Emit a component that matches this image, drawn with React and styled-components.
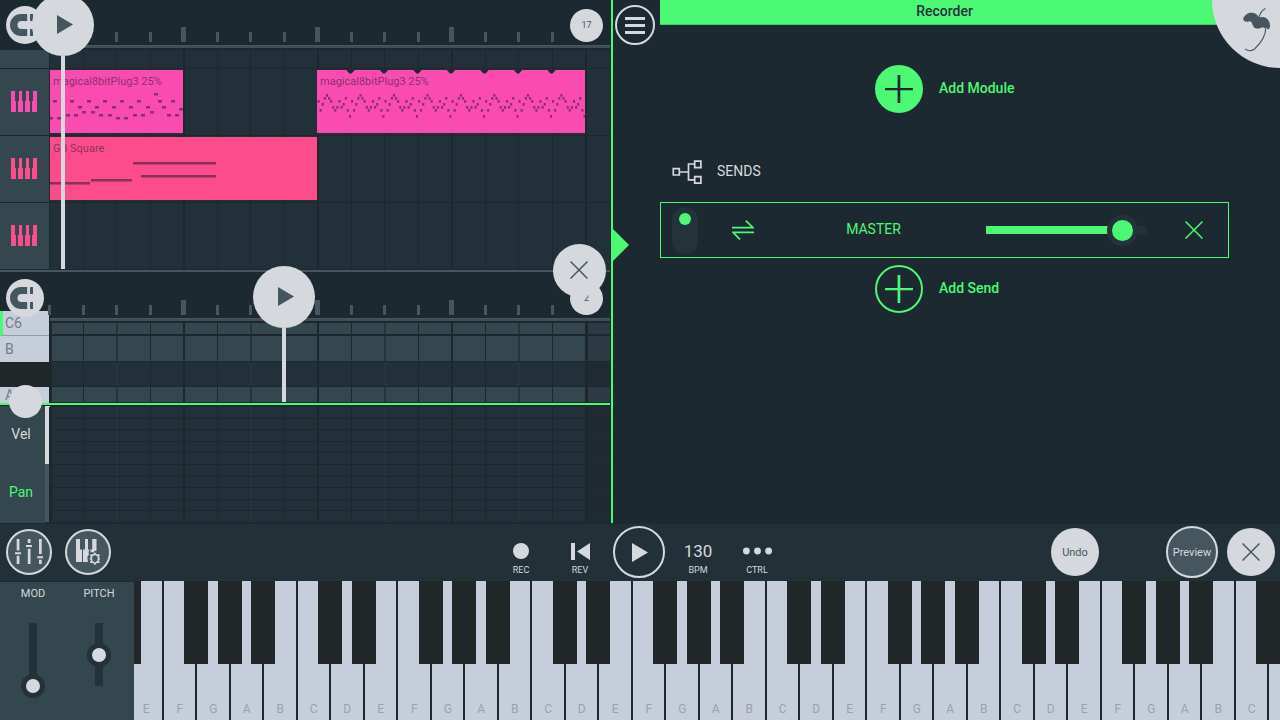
import React, { useState } from 'react';
import styled, { createGlobalStyle, css } from 'styled-components';

const GlobalStyle = createGlobalStyle`
  :root {
    --bg: #1d2930;
    --bg-lane: #223139;
    --bg-side: #34464e;
    --slate: #46565f;
    --light: #d5d9dd;
    --green: #4cf974;
    --key-white: #c7cedb;
    --key-black: #212629;
    --line: #1c272e;
  }

  * {
    box-sizing: border-box;
  }

  body {
    margin: 0;
    background: var(--bg);
    color: var(--light);
    font-family: Roboto, 'Liberation Sans', sans-serif;
    font-size: 14px;
    overflow-x: hidden;
  }

  button,
  input {
    margin: 0;
    padding: 0;
    font: inherit;
    color: inherit;
  }

  button {
    border: none;
    background: none;
    cursor: pointer;
  }

  svg {
    display: block;
  }
`;

const Page = styled.div`
  display: flex;
  flex-direction: column;
  min-height: 100vh;
  overflow: hidden;
`;

const Workspace = styled.main`
  display: grid;
  grid-template-columns: minmax(0, 611fr) minmax(0, 669fr);
  padding-bottom: 1px;
`;

// ---------- shared ----------

const RoundButton = styled.button`
  display: flex;
  align-items: center;
  justify-content: center;
  flex-shrink: 0;
  width: ${(p) => p.$size}px;
  height: ${(p) => p.$size}px;
  border-radius: 50%;
  background: var(--light);
  color: var(--slate);
  font-size: 11px;

  ${(p) =>
    p.$outlined &&
    css`
      border: 2px solid var(--light);
      background: ${p.$fill || 'transparent'};
      color: var(--light);
    `}
`;

// ---------- playlist and piano roll ----------

const Editors = styled.section`
  display: flex;
  flex-direction: column;
  padding-right: 1px;
`;

const Panel = styled.div`
  position: relative;
`;

const RollPanel = styled(Panel)`
  flex: 1;
  display: flex;
  flex-direction: column;
  border-top: 2px solid var(--slate);
  padding-top: 1px;
`;

const WithSide = styled.div`
  display: grid;
  grid-template-columns: 49px minmax(0, 1fr);
`;

const Corner = styled.div`
  position: relative;
  z-index: 1;
  height: ${(p) => p.$height}px;
  padding: 6px;
`;

const SnapButton = styled(RoundButton)`
  padding-right: 7px;
`;

const Ruler = styled.div`
  position: relative;
  height: 50px;
`;

const beatColumns = css`
  display: grid;
  grid-template-columns: repeat(16, minmax(0, 1fr)) 25px;
`;

const Ticks = styled.div`
  ${beatColumns}
  align-items: end;
  height: 45px;
  padding-bottom: 3px;
`;

const Tick = styled.span`
  width: ${(p) => (p.$major ? 5 : 3)}px;
  height: ${(p) => (p.$major ? 15 : 10)}px;
  margin-left: ${(p) => (p.$major ? -2 : -1)}px;
  background: var(--slate);
`;

const RulerLine = styled.div`
  height: 3px;
  margin-left: 1px;
  background: #3e4e57;
  border-top: 1px solid var(--slate);
`;

const BarCount = styled(RoundButton)`
  position: absolute;
  top: 9px;
  right: 7px;
  padding-bottom: 2px;
  font-size: 9px;
`;

const Track = styled.div`
  display: grid;
  grid-template-columns: 49px minmax(0, 1fr);
  height: ${(p) => p.$height}px;
  border-bottom: 1px solid var(--line);
`;

const TrackHead = styled.button`
  display: flex;
  align-items: center;
  justify-content: center;
  padding: 0 2px 2px 0;
  background: var(--bg-side);
  color: ${(p) => p.$color};
`;

const Lane = styled.div`
  ${beatColumns}
`;

const LaneCell = styled.span`
  grid-row: 1;
  grid-column: ${(p) => p.$beat + 1};
  background: var(--bg-lane);
  border-left: ${(p) => (p.$beat && p.$beat % 4 === 0 ? 2 : 1)}px solid var(--line);
`;

const Clip = styled.div`
  grid-row: 1;
  grid-column: ${(p) => p.$from + 1} / ${(p) => p.$to + 1};
  display: grid;
  z-index: 1;
  height: 63px;
  margin-top: 1px;
  margin-left: ${(p) => (p.$from ? 0 : 1)}px;
  background: ${(p) => p.$color};
  overflow: hidden;
`;

const ClipName = styled.span`
  grid-area: 1 / 1;
  padding: 4px 3px;
  font-size: 11px;
  line-height: 15px;
  color: rgba(52, 30, 60, 0.6);
  white-space: nowrap;
`;

const ClipNotes = styled.svg`
  grid-area: 1 / 1;
  width: 100%;
  height: 63px;
  fill: rgba(42, 28, 50, 0.55);
`;

const PlayheadBox = styled.div`
  position: absolute;
  z-index: 2;
  left: ${(p) => p.$left}px;
  top: ${(p) => p.$top}px;
  height: ${(p) => p.$height}px;
  display: flex;
  flex-direction: column;
  align-items: center;
  pointer-events: none;

  button {
    padding: 0 0 2px 3px;
    pointer-events: auto;
  }
`;

const Stem = styled.span`
  flex: 1;
  width: 4px;
  background: var(--light);
`;

const ClosePanel = styled(RoundButton)`
  position: absolute;
  z-index: 3;
  top: -28px;
  right: 4px;
  padding: 0 2px 2px 0;
`;

const Keys = styled.div`
  display: flex;
  flex-direction: column;
`;

const SideKey = styled.button`
  display: flex;
  align-items: center;
  height: ${(p) => p.$height}px;
  padding-left: ${(p) => (p.$root ? 2 : 5)}px;
  background: ${(p) => (p.$black ? 'var(--key-black)' : 'var(--key-white)')};
  border-left: ${(p) => (p.$root ? '3px solid var(--green)' : 'none')};
  border-bottom: ${(p) => (p.$root ? '1px solid #949ba8' : 'none')};
  color: #757b86;
  overflow: hidden;
`;

const RollRow = styled.div`
  ${beatColumns}
  height: ${(p) => p.$height}px;
  border-bottom: ${(p) => p.$gap}px solid var(--line);
`;

const RollCell = styled.span`
  background: ${(p) => (p.$dark ? 'var(--bg-lane)' : 'var(--bg-side)')};
  border-left: 1px solid var(--line);

  ${(p) => p.$beat % 4 === 0 && css`border-left-width: 2px;`}
  ${(p) => p.$beat % 16 === 0 && css`border-left-width: 3px;`}
  ${(p) => p.$beat % 4 === 2 && css`border-left: 2px solid #27343c;`}
  ${(p) =>
    p.$beat === 16 &&
    css`
      background: ${p.$dark ? '#1f2a32' : '#2c3a43'};
    `}
`;

const SplitLine = styled.div`
  height: 2px;
  background: var(--green);
`;

const SplitKnob = styled.button`
  position: absolute;
  z-index: 2;
  left: 9px;
  top: 113px;
  width: 33px;
  height: 33px;
  border-radius: 50%;
  background: var(--light);
`;

const Automation = styled.div`
  flex: 1;
  display: grid;
  grid-template-columns: 45px 5px minmax(0, 1fr);
  min-height: 118px;
`;

const Params = styled.div`
  display: flex;
  flex-direction: column;
  margin-top: 1px;
  background: var(--bg-side);
`;

const Param = styled.button`
  flex: 1;
  padding: 0 3px 3px 0;
  color: ${(p) => (p.$active ? 'var(--green)' : 'var(--light)')};
`;

const Scrollbar = styled.div`
  margin: 1px 0;
  background: linear-gradient(var(--light) 50%, var(--slate) 50%);
`;

const AutomationLanes = styled.div`
  display: flex;
  flex-direction: column;
  margin-left: -1px;
  padding-top: 2px;
`;

const AutomationRow = styled.div`
  ${beatColumns}
  flex: 1;
  border-bottom: 1px solid var(--line);
`;

// ---------- rack ----------

const Rack = styled.section`
  display: grid;
  grid-template-columns: 47px minmax(0, 1fr) 51px;
  border-left: 2px solid var(--green);
  position: relative;
  overflow: hidden;
`;

const Gutter = styled.div`
  padding: 5px 2px;
`;

const PanelHandle = styled.button`
  display: block;
  width: 16px;
  height: 32px;
  margin: 184px 0 0 -2px;
  background: var(--green);
  clip-path: polygon(0 0, 100% 50%, 0 100%);
`;

const RackTitle = styled.h1`
  height: 25px;
  margin: 0 0 40px;
  border-bottom: 1px solid #41cf66;
  background: var(--green);
  color: #22313a;
  font-size: 14px;
  font-weight: 500;
  line-height: 22px;
  text-align: center;
`;

const LogoButton = styled.button`
  position: absolute;
  top: 0;
  right: 0;
  width: 68px;
  height: 68px;
  padding: 8px 9px 16px 31px;
  border-bottom-left-radius: 100%;
  background: var(--light);
  color: var(--slate);
`;

const AddButton = styled.button`
  display: flex;
  align-items: center;
  gap: 16px;
  width: 139px;
  margin: 0 auto;
  color: var(--green);
  font-weight: 500;
  white-space: nowrap;
`;

const AddCircle = styled.span`
  display: flex;
  align-items: center;
  justify-content: center;
  flex-shrink: 0;
  width: 48px;
  height: 48px;
  border: 2px solid var(--green);
  border-radius: 50%;
  background: ${(p) => (p.$filled ? 'var(--green)' : 'transparent')};
  color: ${(p) => (p.$filled ? 'var(--bg)' : 'var(--green)')};
`;

const Label = styled.span`
  padding-bottom: 2px;
`;

const SendsTitle = styled.h2`
  display: flex;
  align-items: center;
  gap: 15px;
  height: 24px;
  margin: 47px 0 18px 12px;
  font-size: 14px;
  font-weight: 400;
`;

const Send = styled.div`
  display: grid;
  grid-template-columns: 48px 68px minmax(0, 1fr) 160px 82px;
  align-items: center;
  justify-items: center;
  height: 56px;
  margin-bottom: 7px;
  border: 1px solid var(--green);
  color: var(--green);
`;

const SendSwitch = styled.input`
  appearance: none;
  width: 26px;
  height: 47px;
  border-radius: 13px;
  background: #24323a;
  cursor: pointer;

  &::before {
    content: '';
    display: block;
    width: 12px;
    height: 12px;
    margin: 28px auto 0;
    border-radius: 50%;
    background: var(--slate);
  }

  &:checked::before {
    margin-top: 6px;
    background: var(--green);
  }
`;

const SendName = styled.span`
  padding: 0 16px 2px 0;
`;

const LevelSlider = styled.input`
  appearance: none;
  width: 160px;
  height: 8px;
  background: linear-gradient(var(--green), var(--green)) no-repeat #24323a;

  &::-webkit-slider-thumb {
    appearance: none;
    width: 31px;
    height: 31px;
    border: 5px solid #24323a;
    border-radius: 50%;
    background: var(--green);
  }
`;

const RemoveSend = styled.button`
  padding-left: 14px;
`;

// ---------- transport ----------

const Transport = styled.div`
  display: grid;
  grid-template-columns: minmax(0, 1fr) auto minmax(0, 1fr);
  align-items: center;
  height: 57px;
  padding-bottom: 1px;
  background: #223038;
`;

const ToolsLeft = styled.div`
  display: flex;
  gap: 13px;
  padding-left: 6px;
`;

const Controls = styled.div`
  display: flex;
  align-items: center;
  padding-right: 2px;
`;

const Control = styled.button`
  display: flex;
  flex-direction: column;
  align-items: center;
  gap: 5px;
  width: 59px;
  height: 56px;
  padding-top: 18px;
  font-size: 9px;
  line-height: 10px;
`;

const ControlIcon = styled.span`
  display: flex;
  align-items: center;
  height: 18px;
  font-size: 17px;
`;

const PlayCell = styled.div`
  display: flex;
  justify-content: center;
  width: 59px;

  button {
    padding-left: 2px;
  }
`;

const ToolsRight = styled.div`
  display: flex;
  align-items: center;
  justify-content: flex-end;
  gap: 9px;
  padding-right: 5px;
`;

const UndoButton = styled(RoundButton)`
  margin-right: 58px;
`;

// ---------- keyboard ----------

const KeyboardArea = styled.div`
  flex: 1;
  display: grid;
  grid-template-columns: 134px minmax(0, 1fr);
  min-height: 139px;
`;

const Wheels = styled.div`
  display: grid;
  grid-template-columns: 1fr 1fr;
  margin-top: 1px;
  padding-right: 2px;
  background: var(--bg-side);
`;

const Wheel = styled.label`
  display: flex;
  flex-direction: column;
  align-items: center;
  gap: 10px;
  padding-top: 5px;
  font-size: 11px;
  line-height: 14px;
`;

const WheelSlider = styled.input`
  appearance: none;
  writing-mode: vertical-lr;
  direction: rtl;
  width: 24px;
  height: 87px;
  background: linear-gradient(#233139, #233139) center / 8px 63px no-repeat;

  &::-webkit-slider-thumb {
    appearance: none;
    width: 24px;
    height: 24px;
    border: 5px solid #233139;
    border-radius: 50%;
    background: var(--light);
  }
`;

const Keyboard = styled.div`
  display: flex;
  overflow: hidden;
  background: var(--bg);
`;

const WhiteKey = styled.button`
  position: relative;
  flex: ${(p) => (p.$cut ? '0 0 12px' : '1 1 0')};
  display: flex;
  align-items: flex-end;
  justify-content: center;
  min-width: 0;
  padding: 0 0 4px 1px;
  border: solid var(--bg);
  border-width: 0 1px;
  background: var(--key-white);
  color: #9ba1ab;
  font-size: 12px;
  line-height: 14px;

  &:first-child {
    margin-left: -5px;
  }

  &:last-child {
    border-right: none;
  }
`;

const BlackKey = styled.span`
  position: absolute;
  z-index: 1;
  top: 0;
  left: -13px;
  width: 24px;
  height: 83px;
  background: var(--key-black);
`;

// ---------- icons ----------

const PlayIcon = () => (
  <svg width="16" height="19" viewBox="0 0 16 19" fill="currentColor">
    <path d="M0 0 16 9.5 0 19Z" />
  </svg>
);

const MagnetIcon = () => (
  <svg width="23" height="22" viewBox="0 0 23 22" fill="currentColor">
    <path d="M17.2 0H11A11 11 0 0 0 11 22H17.2V15H11.5A4 4 0 0 1 11.5 7H17.2Z" />
    <path d="M20 0h3v7h-3zM20 15h3v7h-3z" />
  </svg>
);

const PianoIcon = () => (
  <svg width="26" height="21" viewBox="0 0 26 21" fill="currentColor">
    <path d="M0 0h4v10h1v11H0zM8 0h3v10h1v11H7V10h1zM15 0h3v10h1v11h-5V10h1zM22 0h4v21h-5V10h1z" />
  </svg>
);

const CrossIcon = () => (
  <svg width="18" height="18" viewBox="0 0 18 18" fill="none" stroke="currentColor" strokeWidth="1.5">
    <path d="M.5.5l17 17M17.5.5l-17 17" />
  </svg>
);

const PlusIcon = () => (
  <svg width="28" height="28" viewBox="0 0 28 28" fill="currentColor">
    <path d="M12.6 0h2.7v28h-2.7zM0 13h28v2.300H0z" />
  </svg>
);

const MenuIcon = () => (
  <svg width="20" height="17" viewBox="0 0 20 17" fill="currentColor">
    <path d="M0 0h20v3H0zM0 7h20v3H0zM0 14h20v3H0z" />
  </svg>
);

const SendsIcon = () => (
  <svg width="30" height="24" viewBox="0 0 30 24" fill="none" stroke="currentColor" strokeWidth="1.7">
    <path d="M1.3 8.7h6v6.300h-6zM22.700 1.2h6.200v6.400h-6.200zM22.700 16.700h6.200v6.400h-6.200zM7.500 12h9M22.500 4h-6v15.800h6" />
  </svg>
);

const SwapIcon = () => (
  <svg width="22" height="20" viewBox="0 0 22 20" fill="none" stroke="currentColor" strokeWidth="1.7">
    <path d="M0 7.600h21L13.800.6M22 12.400H1l7 7" />
  </svg>
);

const PalmIcon = () => (
  <svg width="28" height="44" viewBox="0 0 28 44">
    <path
      fill="currentColor"
      d="M0 11C1.5 7 5 4.300 8.500 4.700 12 4.800 14.500 6.500 16 9.500 20 8 24 9.500 25.800 13 27.500 16 27.300 19 26 21.200L24.500 21 23.300 19.300 21.800 20.300 20 19.300 17.500 20 15 20.800 11.500 20 9.500 16.800 8.500 14 5.800 13 5 14.600 3.300 12.900 2.300 14 1 12.500Z"
    />
    <path
      fill="none"
      stroke="currentColor"
      strokeWidth="1.1"
      d="M15.800 10C17 5.500 19 2 22.500.5M22.800 19C23 27 18 35 11.500 41 8 43.600 5 43.300 2 40.800"
    />
  </svg>
);

const MixerIcon = () => (
  <svg width="28" height="26" viewBox="0 0 28 26" fill="currentColor">
    <path d="M1.7 0h2.700v11.500H1.700zM1.700 16.800h2.700V25H1.700zM0 13.200h6v2H0z" />
    <path d="M12.800 0h2.700v4h-2.700zM12.800 9.800h2.700V25h-2.700zM11 6h6v2h-6z" />
    <path d="M24 0h2.700v15H24zM24 20.800h2.700V25H24zM22.300 17.200h6v2h-6z" />
  </svg>
);

const PianoGearIcon = () => (
  <svg width="24" height="26" viewBox="0 0 24 26">
    <path
      fill="currentColor"
      d="M0 0h4v10.500h2V23H0zM9 0h3v10.500h1.500l-1 3 .5 2-1.700 2.500.7 5H7V10.500h2zM16.200 0h4.300v11.700l-2 .3-1 1.800-1.800-.8-1.200.5V10.500h1.700z"
    />
    <path
      fill="none"
      stroke="currentColor"
      strokeWidth="1.5"
      strokeLinejoin="round"
      d="M18.900 14.300l1.500 2 2.600-.2-1 2.400 1.500 1.200-1.500 1.200 1 2.400-2.600-.2-1.500 2-1.500-2-2.600.2 1-2.400-1.500-1.200 1.500-1.200-1-2.400 2.600.2z"
    />
  </svg>
);

const RewindIcon = () => (
  <svg width="19" height="17" viewBox="0 0 19 17" fill="currentColor">
    <path d="M0 0h4v17H0zM19 0v17L6 8.5z" />
  </svg>
);

const RecordIcon = () => (
  <svg width="16" height="16" viewBox="0 0 16 16" fill="currentColor">
    <circle cx="8" cy="8" r="8" />
  </svg>
);

const DotsIcon = () => (
  <svg width="29" height="8" viewBox="0 0 29 8" fill="currentColor">
    <circle cx="3.400" cy="4" r="3.400" />
    <circle cx="14.500" cy="4" r="3.400" />
    <circle cx="25.600" cy="4" r="3.400" />
  </svg>
);

// ---------- data ----------

const BEATS = Array.from({ length: 17 }, (_, i) => i);

const PINK = '#fa4cb0';
const ROSE = '#fc4c8c';

// [x, y, width] inside the clip
const LEAD_NOTES = [
  [0, 47, 3], [7, 47, 4], [16, 44, 4], [24, 44, 4], [32, 41, 4], [41, 41, 4],
  [49, 44, 4], [58, 44, 4], [66, 47, 4], [74, 47, 4], [83, 44, 4], [91, 44, 4],
  [100, 41, 4], [117, 44, 4], [125, 44, 4], [129, 38, 4], [3, 30, 4], [20, 30, 4],
  [37, 30, 4], [53, 30, 4], [70, 30, 4], [87, 30, 4], [108, 30, 4], [121, 30, 4],
  [104, 23, 4], [28, 36, 4], [45, 36, 4], [62, 36, 4], [79, 36, 4], [96, 36, 4],
  [112, 36, 4], [11, 36, 4],
];

// one note per 16th, repeated every beat
const ARP_STEPS = [30, 39, 33, 27, 24, 27, 30, 36, 39, 36, 30, 36, 33, 27, 39, 45];

const SQUARE_NOTES = [
  [0, 45, 40], [41, 42, 41], [83, 25, 83], [91, 38, 75],
];

const ROLL_ROWS = [
  { height: 13, gap: 2 },
  { height: 26, gap: 1 },
  { height: 25, gap: 1, dark: true },
  { height: 16, gap: 1 },
];

const NOTE_NAMES = ['E', 'F', 'G', 'A', 'B', 'C', 'D'];
const WHITE_KEYS = Array.from({ length: 34 }, (_, i) => NOTE_NAMES[i % 7]);

// a black key sits on the left edge of every note but C and F
const hasSharpBefore = (note) => note !== 'C' && note !== 'F';

// ---------- parts ----------

const BeatRuler = ({ count }) => (
  <Ruler>
    <Ticks>
      {BEATS.map((beat) => (
        <Tick key={beat} $major={beat > 0 && beat % 4 === 0} />
      ))}
    </Ticks>
    <RulerLine />
    <BarCount $size={33} title="Bars">{count}</BarCount>
  </Ruler>
);

const Playhead = ({ left, top, height }) => (
  <PlayheadBox $left={left} $top={top} $height={height}>
    <RoundButton $size={62} aria-label="Play">
      <PlayIcon />
    </RoundButton>
    <Stem />
  </PlayheadBox>
);

const PlaylistTrack = ({ height, color, children }) => (
  <Track $height={height}>
    <TrackHead $color={color} aria-label="Track">
      {color && <PianoIcon />}
    </TrackHead>
    <Lane>
      {BEATS.map((beat) => (
        <LaneCell key={beat} $beat={beat} />
      ))}
      {children}
    </Lane>
  </Track>
);

const Playlist = () => (
  <Panel>
    <WithSide>
      <Corner $height={50}>
        <SnapButton $size={38} aria-label="Snap">
          <MagnetIcon />
        </SnapButton>
      </Corner>
      <BeatRuler count={17} />
    </WithSide>
    <PlaylistTrack height={19} />
    <PlaylistTrack height={67} color={PINK}>
      <Clip $from={0} $to={4} $color={PINK}>
        <ClipName>magical8bitPlug3 25%</ClipName>
        <ClipNotes viewBox="0 0 133 63" preserveAspectRatio="none">
          {LEAD_NOTES.map(([x, y, w]) => (
            <rect key={`${x}-${y}`} x={x} y={y} width={w} height="2.5" />
          ))}
        </ClipNotes>
      </Clip>
      <Clip $from={8} $to={16} $color={PINK}>
        <ClipName>magical8bitPlug3 25%</ClipName>
        <ClipNotes viewBox="0 0 256 63" preserveAspectRatio="none">
          {BEATS.slice(0, 8).map((beat) => (
            <g key={beat} transform={`translate(${beat * 32} 0)`}>
              {ARP_STEPS.map((y, i) => (
                <rect key={i} x={i * 2 + 0.5} y={y} width="2" height="2.7" />
              ))}
              {beat > 0 && <path d="M-4 0h8l-3 3.500h-2z" fill="#1e2931" />}
            </g>
          ))}
        </ClipNotes>
      </Clip>
    </PlaylistTrack>
    <PlaylistTrack height={67} color={ROSE}>
      <Clip $from={0} $to={8} $color={ROSE}>
        <ClipName>GB Square</ClipName>
        <ClipNotes viewBox="0 0 267 63" preserveAspectRatio="none">
          {SQUARE_NOTES.map(([x, y, w]) => (
            <rect key={x} x={x} y={y} width={w} height="2.5" />
          ))}
        </ClipNotes>
      </Clip>
    </PlaylistTrack>
    <PlaylistTrack height={67} color={ROSE} />
    <Playhead left={32} top={-6} height={275} />
  </Panel>
);

const PianoRoll = () => {
  const [param, setParam] = useState('Pan');

  return (
    <RollPanel>
      <WithSide>
        <Keys>
          <Corner $height={38}>
            <SnapButton $size={38} aria-label="Snap">
              <MagnetIcon />
            </SnapButton>
          </Corner>
          <SideKey $height={25} $root>C6</SideKey>
          <SideKey $height={26}>B</SideKey>
          <SideKey $height={25} $black aria-label="A sharp" />
          <SideKey $height={16}>A</SideKey>
        </Keys>
        <div>
          <BeatRuler count={2} />
          {ROLL_ROWS.map((row, i) => (
            <RollRow key={i} $height={row.height} $gap={row.gap}>
              {BEATS.map((beat) => (
                <RollCell key={beat} $beat={beat} $dark={row.dark} />
              ))}
            </RollRow>
          ))}
        </div>
      </WithSide>
      <SplitLine />
      <Automation>
        <Params>
          {['Vel', 'Pan'].map((name) => (
            <Param key={name} $active={param === name} onClick={() => setParam(name)}>
              {name}
            </Param>
          ))}
        </Params>
        <Scrollbar />
        <AutomationLanes>
          {BEATS.slice(0, 10).map((row) => (
            <AutomationRow key={row}>
              {BEATS.map((beat) => (
                <RollCell key={beat} $beat={beat} $dark />
              ))}
            </AutomationRow>
          ))}
        </AutomationLanes>
      </Automation>
      <SplitKnob aria-label="Resize" />
      <Playhead left={253} top={-6} height={136} />
      <ClosePanel $size={53} aria-label="Close piano roll">
        <CrossIcon />
      </ClosePanel>
    </RollPanel>
  );
};

const RecorderRack = () => {
  const [enabled, setEnabled] = useState(true);
  const [level, setLevel] = useState(94);

  return (
    <Rack>
      <Gutter>
        <RoundButton $size={40} $outlined aria-label="Menu">
          <MenuIcon />
        </RoundButton>
        <PanelHandle aria-label="Resize panel" />
      </Gutter>
      <div>
        <RackTitle>Recorder</RackTitle>
        <AddButton>
          <AddCircle $filled>
            <PlusIcon />
          </AddCircle>
          <Label>Add Module</Label>
        </AddButton>
        <SendsTitle>
          <SendsIcon />
          <Label>SENDS</Label>
        </SendsTitle>
        <Send>
          <SendSwitch
            type="checkbox"
            aria-label="Send enabled"
            checked={enabled}
            onChange={(e) => setEnabled(e.target.checked)}
          />
          <SwapIcon />
          <SendName>MASTER</SendName>
          <LevelSlider
            type="range"
            aria-label="Send level"
            value={level}
            onChange={(e) => setLevel(Number(e.target.value))}
            style={{ backgroundSize: `${level * 0.81}% 100%` }}
          />
          <RemoveSend aria-label="Remove send">
            <CrossIcon />
          </RemoveSend>
        </Send>
        <AddButton>
          <AddCircle>
            <PlusIcon />
          </AddCircle>
          <Label>Add Send</Label>
        </AddButton>
      </div>
      <LogoButton aria-label="Home">
        <PalmIcon />
      </LogoButton>
    </Rack>
  );
};

const TransportBar = () => (
  <Transport>
    <ToolsLeft>
      <RoundButton $size={46} $outlined $fill="#46565f" aria-label="Mixer">
        <MixerIcon />
      </RoundButton>
      <RoundButton $size={46} $outlined $fill="#46565f" aria-label="Keyboard settings">
        <PianoGearIcon />
      </RoundButton>
    </ToolsLeft>
    <Controls>
      <Control>
        <ControlIcon><RecordIcon /></ControlIcon>
        REC
      </Control>
      <Control>
        <ControlIcon><RewindIcon /></ControlIcon>
        REV
      </Control>
      <PlayCell>
        <RoundButton $size={52} $outlined aria-label="Play">
          <PlayIcon />
        </RoundButton>
      </PlayCell>
      <Control>
        <ControlIcon>130</ControlIcon>
        BPM
      </Control>
      <Control>
        <ControlIcon><DotsIcon /></ControlIcon>
        CTRL
      </Control>
    </Controls>
    <ToolsRight>
      <UndoButton $size={48}>Undo</UndoButton>
      <RoundButton $size={52} $outlined $fill="#46565f">Preview</RoundButton>
      <RoundButton $size={48} aria-label="Close keyboard">
        <CrossIcon />
      </RoundButton>
    </ToolsRight>
  </Transport>
);

const KeyboardPanel = () => {
  const [mod, setMod] = useState(0);
  const [pitch, setPitch] = useState(50);

  return (
    <KeyboardArea>
      <Wheels>
        <Wheel>
          MOD
          <WheelSlider type="range" value={mod} onChange={(e) => setMod(Number(e.target.value))} />
        </Wheel>
        <Wheel>
          PITCH
          <WheelSlider type="range" value={pitch} onChange={(e) => setPitch(Number(e.target.value))} />
        </Wheel>
      </Wheels>
      <Keyboard>
        {WHITE_KEYS.map((note, i) => (
          <WhiteKey key={i}>
            {hasSharpBefore(note) && <BlackKey />}
            {note}
          </WhiteKey>
        ))}
        <WhiteKey $cut aria-label="D">
          <BlackKey />
        </WhiteKey>
      </Keyboard>
    </KeyboardArea>
  );
};

const App = () => (
  <Page>
    <GlobalStyle />
    <Workspace>
      <Editors>
        <Playlist />
        <PianoRoll />
      </Editors>
      <RecorderRack />
    </Workspace>
    <TransportBar />
    <KeyboardPanel />
  </Page>
);

export default App;
